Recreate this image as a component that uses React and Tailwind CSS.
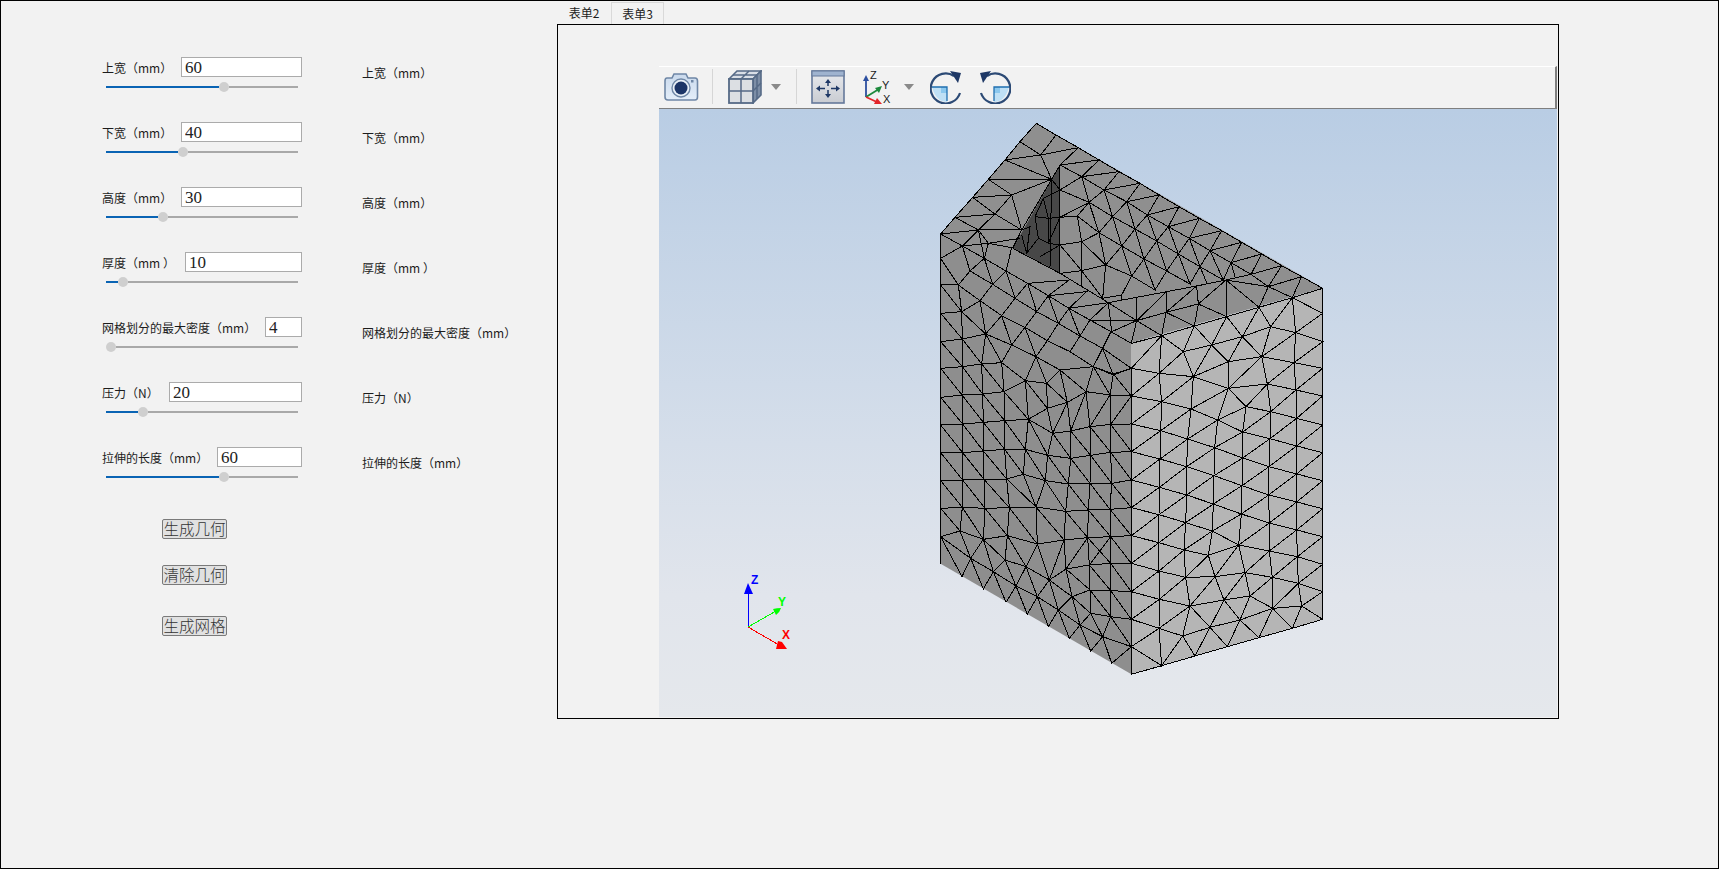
const rows = [
  { label: "上宽（mm）", value: "60", input: "w-[121px]", fill: "w-[113px]" },
  { label: "下宽（mm）", value: "40", input: "w-[121px]", fill: "w-[72px]" },
  { label: "高度（mm）", value: "30", input: "w-[121px]", fill: "w-[52px]" },
  { label: "厚度（mm ）", value: "10", input: "w-[117px]", fill: "w-[12px]" },
  { label: "网格划分的最大密度（mm）", value: "4", input: "w-[37px]", fill: "w-0" },
  { label: "压力（N）", value: "20", input: "w-[133px]", fill: "w-[32px]" },
  { label: "拉伸的长度（mm）", value: "60", input: "w-[85px]", fill: "w-[113px]" },
];

const buttons = [
  { text: "生成几何", margin: "mt-[7px]" },
  { text: "清除几何", margin: "mt-[26px]" },
  { text: "生成网格", margin: "mt-[31px]" },
];

// one polyline per line, traced from the reference at 3x
const toPath = (s) =>
  s
    .trim()
    .split("\n")
    .map((l) => "M" + l.trim().split(/\s+/).join("L"))
    .join("");

const topEdges = toPath(`
  349,40 300,95 255,150 205,208 158,262 105,322 62,372
  349,40 408,75 475,113 537,150 597,185 660,220 717,255 777,290 838,325 905,362 965,397 1025,432 1085,467 1145,500 1208,535
  62,372 127,408 193,445 258,483 323,520 385,557 447,595 510,630 573,665 634,700
  300,95 362,135 408,75
  362,135 475,113
  255,150 362,135 395,208 255,150
  205,208 395,208 275,255 205,208
  158,262 275,255 225,312 158,262
  105,322 225,312 175,360 105,322
  62,372 175,360 305,360 225,312
  275,255 305,360 395,208 420,165 475,113
  420,165 537,150 485,200 420,165
  485,200 597,185 552,240 485,200
  552,240 660,220 620,275 552,240
  620,275 717,255 682,315 620,275
  682,315 777,290 745,350 682,315
  745,350 838,325 808,385 745,350
  808,385 905,362 870,422 808,385
  870,422 965,397 933,458 870,422
  933,458 1025,432 993,493 933,458
  993,493 1085,467 1045,530 993,493
  1045,530 1145,500 1117,563 1045,530
  1117,563 1208,535
  127,408 175,360 193,445
  127,408 205,400 300,385
  175,360 205,400 193,445
  205,400 275,413 258,483
  420,240 485,200 507,277 420,240
  507,277 552,240 578,320 507,277
  578,320 620,275 645,357 578,320
  645,357 682,315 710,393 645,357
  710,393 745,350 775,432 710,393
  775,432 808,385 840,470 775,432
  840,470 870,422 910,510 840,470
  910,510 933,458 945,500
  918,510 993,493
  420,322 472,318 507,277 420,322
  472,318 537,368 507,277
  537,368 578,320 605,408 537,368
  605,408 645,357 672,447 605,408
  672,447 710,393 740,483 672,447
  740,483 775,432 810,522 740,483
  810,522 840,470 860,518
  472,318 485,395 537,368 557,465 485,395 420,405
  557,465 605,408 635,498 557,465
  635,498 672,447 705,540 635,498
  705,540 740,483
  420,490 485,482 420,405
  485,395 485,530
  485,482 557,465 548,565 485,482
  557,465 548,565 605,555 635,498
  605,555 605,570
  323,520 447,510 385,557 500,545 447,595 565,578 510,630 650,632 565,578 575,665 650,632
  420,490 565,578 650,562 740,545 830,528 918,510 1045,530
  650,562 650,632 740,545 738,607 830,528 835,582 918,510 920,620 835,582 738,607 650,632
  565,578 650,562
  650,632 725,677 738,607 823,648 835,582 920,620 1017,592 918,510
  1017,592 1045,530
  650,632 634,700 573,665
`);

const notchEdges = toPath(`
  420,165 420,490
  395,208 390,470
  395,208 420,240 370,265 385,325 420,322
  370,265 345,320 385,325 385,400 420,405 360,440
  345,320 355,385 320,430 330,350 305,360
  355,385 385,400
  420,322 385,400
  278,415 305,360
  278,415 420,490
  320,430 305,375
`);

const upperFaces = toPath(`
  634,700 725,677 823,648 920,620 1017,592 1117,563 1208,535 1208,610 1208,695 1208,775
  634,775 725,677 717,790 634,775
  725,677 790,725 823,648 875,705 920,620 967,680 1017,592 1052,650 1117,563 1127,668 1208,610 1117,563
  790,725 875,705 967,680 1052,650 1127,668 1208,695 1122,758 1127,668 1025,740 1052,650
  1122,758 1208,775
  1025,740 1122,758
  967,680 1025,740 925,755 967,680
  875,705 925,755 820,800 875,705
  790,725 820,800 717,790 790,725
  62,372 62,445 62,525 62,610 62,695 62,775
  62,445 127,408 150,483 193,445 218,523 258,483 285,565 323,520 350,605 385,557 415,640 447,595 480,678 510,630
  150,483 218,523 285,565 350,605 415,640 480,678 548,715 573,665
  62,445 115,525 150,483
  62,525 115,525 180,572 218,523
  180,572 245,617 285,565
  245,617 315,652 350,605
  315,652 382,692 415,640
  382,692 450,725 480,678
  450,725 520,770 548,715 634,775
  62,525 125,605 115,525
  125,605 180,572 197,672 245,617 275,705 315,652 348,740 382,692
  62,610 125,605 127,687 62,610
  125,605 197,672 127,687 62,695
  127,687 62,695
  62,695 127,770 127,687 185,762 197,672 245,758 275,705 348,740
  62,775 127,770 185,762 245,758
  450,725 382,692
  275,705 197,672
  548,715 580,795 520,770
  580,795 634,775
`);

const lowerLeft = toPath(`
  62,-5 126,75 127,-10 188,72 185,-18 252,65 245,-22 316,32 348,-40 380,40 316,32 252,65
  62,82 126,75 188,72 252,65
  62,-5 62,583
  348,-40 420,0 380,40 442,97 420,0 498,65 442,97 382,115 380,40
  382,115 316,32 325,148 252,65
  325,148 382,115 398,190 442,97 452,183 498,65 510,170 570,75 572,163 634,78
  498,65 520,-10 570,75 580,12 520,-10
  580,12 634,-5
  580,12 634,78 570,75 498,65
  420,0 520,-10
  62,82 128,162 126,75 190,157 188,72 254,152 252,65
  62,165 128,162 190,157 254,152 325,148 398,190 452,183 510,170 572,163 634,162
  62,248 128,248 190,243 254,238 316,238 383,256 452,265 512,256 572,247 634,245
  62,332 128,330 192,328 260,327 310,313 376,332 445,342 510,340 575,340 634,330
  62,415 127,412 195,415 268,413 348,411 437,424 505,420 570,418 634,413
  62,500 120,483 190,508 262,497 352,522 432,510 503,503 572,500 634,497
  62,165 128,248 128,162 190,243 190,157 254,238 254,152 316,238 325,148 383,256 398,190 452,265 452,183 512,256 510,170 572,247 572,163 634,245
  62,248 128,330 128,248 192,328 190,243 260,327 254,238 310,313 316,238 376,332 383,256 445,342 452,265 510,340 512,256 575,340 572,247 634,330
  62,332 127,412 128,330 195,415 192,328 268,413 260,327 348,411 310,313
  348,411 376,332 437,424 445,342 505,420 510,340 570,418 575,340 634,413
  62,415 120,483 127,412 190,508 195,415 262,497 268,413 352,522 348,411 432,510 437,424 503,503 505,420 572,500 570,418 634,497
  62,500 152,565 120,483
  62,500 126,620 152,565 190,508 255,570 262,497 318,590 352,522 388,630 432,510 438,597 503,503 508,585 572,500 634,580
  152,565 190,657 220,605 152,565
  190,508 220,605 255,570 318,590 288,648 255,570
  220,605 288,648 352,680 318,590 388,630 352,680
  220,605 258,697 288,648 322,733 352,680 385,770 415,720 352,680
  388,630 438,597 508,585 572,580 634,580
  503,503 572,580 572,500
  388,630 415,720 456,680 388,630
  438,597 456,680 510,660 438,597
  508,585 510,660 572,662 508,585
  572,580 572,662 634,665 572,580
  456,680 512,730 510,660 572,740 572,662 634,748 572,740 512,730
  415,720 480,765 456,680
  480,765 512,730 548,800 480,765
  415,720 448,805 480,765 512,843 548,800 575,880 634,830 548,800
  572,740 548,800
  572,740 634,830
`);

const lowerRight = toPath(`
  634,-5 717,10 820,20 925,55 1042,42 1128,60 1208,78
  634,-5 634,913
  717,10 634,78 725,95 820,20 813,117 925,55 893,150 978,110 925,55
  717,10 725,95
  634,78 725,95 813,117 893,150 968,186 1050,206 1130,228 1208,248
  978,110 1042,42 1052,125 1128,60 1130,145 1208,78
  978,110 1052,125 1130,145 1208,165
  893,150 968,186 978,110
  968,186 1052,125 1050,206 1130,145 1130,228 1208,165
  925,55 925,-25 820,20
  925,55 1025,-40 1042,42 1122,-22 1128,60 1208,-5
  634,162 722,182 803,207 884,233 968,264 1047,290 1130,312 1208,332
  634,245 720,267 800,290 882,317 966,347 1046,375 1130,396 1208,416
  634,330 718,352 800,375 880,402 964,432 1048,459 1130,480 1208,500
  634,413 717,434 797,458 877,483 956,525 1048,543 1132,560 1208,583
  634,497 717,518 792,540 865,556 956,525
  634,580 717,603 797,622 885,620 975,608 1057,622 1135,640 1208,665
  634,665 718,688 810,708 912,690 990,678 1058,715 1145,708 1208,748
  634,748 717,775 788,798 870,772 960,750 1058,715
  634,162 725,95 722,182 813,117 803,207 893,150 884,233 968,186 968,264 1050,206 1047,290 1130,228 1130,312 1208,248
  634,245 722,182 720,267 803,207 800,290 884,233 882,317 968,264 966,347 1047,290 1046,375 1130,312 1130,396 1208,332
  634,330 720,267 718,352 800,290 800,375 882,317 880,402 966,347 964,432 1046,375 1048,459 1130,396 1130,480 1208,416
  634,413 718,352 717,434 800,375 797,458 880,402 877,483 964,432 956,525 1048,459 1048,543 1130,480 1132,560 1208,500
  634,497 717,434 717,518 797,458 792,540 877,483 865,556 885,620 956,525 975,608 1048,543 1057,622 1132,560 1135,640 1208,583
  634,580 717,518 717,603 792,540 797,622 865,556
  634,665 717,603 718,688 797,622 810,708 885,620 912,690 975,608 990,678 1057,622 1058,715 1135,640 1145,708 1208,665
  634,748 718,688 717,775 810,708 788,798 717,775
  810,708 870,772 912,690 960,750 990,678
  1058,715 1117,775 1145,708
  1058,715 1017,803 960,750 922,830 870,772 825,858 788,798 725,887 717,775 634,830
  634,913 725,887 825,858 922,830 1017,803 1117,775 1208,748
  634,830 725,887
  1208,-245 1208,748
`);

function MeshView() {
  return (
    <svg className="block h-full w-full" viewBox="659 109 898 608">
      <defs>
        <linearGradient id="viewerBg" x1="0" y1="0" x2="0" y2="1">
          <stop offset="0" stopColor="#b9cde4" />
          <stop offset="0.55" stopColor="#d5deea" />
          <stop offset="0.8" stopColor="#e1e5ec" />
          <stop offset="1" stopColor="#e5e8ec" />
        </linearGradient>
      </defs>
      <rect x="659" y="109" width="898" height="608" fill="url(#viewerBg)" />
      <polygon points="1036,123 1323,288 1131,343 941,234" fill="#8f8f8f" />
      <polygon points="941,234 1131,343 1131,674 941,564" fill="#8e8e8e" />
      <polygon points="1131,343 1323,288 1323,619 1131,674" fill="#b5b5b5" />
      <polygon points="1060,165 1013,248 1060,273" fill="#474747" />
      <g
        fill="none"
        stroke="#000000"
        strokeWidth="1"
        shapeRendering="crispEdges"
      >
        <g transform="translate(920 110) scale(0.33333)">
          <path d={topEdges} vectorEffect="non-scaling-stroke" />
          <path d={notchEdges} vectorEffect="non-scaling-stroke" />
          <path d={upperFaces} vectorEffect="non-scaling-stroke" />
        </g>
        <g transform="translate(920 370) scale(0.33333)">
          <path d={lowerLeft} vectorEffect="non-scaling-stroke" />
          <path d={lowerRight} vectorEffect="non-scaling-stroke" />
        </g>
      </g>

      {/* axis triad */}
      <g shapeRendering="crispEdges">
        <line x1="748" y1="627" x2="748" y2="590" stroke="#0000ff" />
        <line x1="748" y1="627" x2="776" y2="611" stroke="#00ff00" />
        <line x1="748" y1="627" x2="779" y2="645" stroke="#ff0000" />
      </g>
      <path d="M748,583 L753,594 744,594 Z" fill="#0000ff" />
      <path d="M773,609 Q777,608 781,608 Q780,612 776,615 Z" fill="#00ff00" />
      <path d="M778,641 L782,642 787,649 776,649 Z" fill="#ff0000" />
      <g fontFamily="'Liberation Sans', sans-serif" fontSize="12" fontWeight="700">
        <text x="751" y="584" fill="#0000ff">Z</text>
        <text x="778" y="606" fill="#00ff00">Y</text>
        <text x="782" y="639" fill="#ff0000">X</text>
      </g>
    </svg>
  );
}

function CameraIcon() {
  return (
    <svg className="block h-[30px] w-[35px]" viewBox="0 0 35 30">
      <defs>
        <linearGradient id="camFill" x1="0" y1="0" x2="0" y2="1">
          <stop offset="0" stopColor="#c9d9ec" />
          <stop offset="1" stopColor="#e4eef9" />
        </linearGradient>
      </defs>
      <path
        d="M3,6 H8 L10,2 H22 L24,6 H31 Q33.5,6 33.5,9 V25 Q33.5,28 31,28 H4 Q1,28 1,25 V9 Q1,6 3,6 Z"
        fill="url(#camFill)"
        stroke="#6f87a6"
        strokeWidth="1.6"
      />
      <circle cx="17" cy="16" r="9" fill="#e9f0f8" stroke="#6f87a6" strokeWidth="1.4" />
      <circle cx="17" cy="16" r="6.5" fill="#1c3567" />
      <rect x="27" y="8" width="2.5" height="2.5" fill="#6f87a6" />
    </svg>
  );
}

function CubeIcon() {
  return (
    <svg className="block h-[34px] w-[34px]" viewBox="0 0 34 34">
      <path d="M1,9 L9,1 H33 L25,9 Z" fill="#d9dee6" stroke="#566a86" strokeWidth="1.6" />
      <path d="M25,9 L33,1 V25 L25,33 Z" fill="#7d8ea6" stroke="#566a86" strokeWidth="1.6" />
      <rect x="1" y="9" width="24" height="24" fill="#dcdfe3" stroke="#566a86" strokeWidth="1.8" />
      <path d="M13,9 V33 M1,21 H25 M13,9 L21,1 M5,5 H29 M25,21 L33,13 M29,5 V29" stroke="#566a86" strokeWidth="1.5" fill="none" />
    </svg>
  );
}

function FitIcon() {
  return (
    <svg className="block h-[34px] w-[34px]" viewBox="0 0 34 34">
      <defs>
        <linearGradient id="fitFill" x1="0" y1="0" x2="0" y2="1">
          <stop offset="0" stopColor="#e8eaee" />
          <stop offset="1" stopColor="#c9ccd2" />
        </linearGradient>
      </defs>
      <rect x="1" y="1" width="32" height="32" fill="url(#fitFill)" stroke="#64789a" strokeWidth="1.6" />
      <rect x="1" y="1" width="32" height="5" fill="#9fb3cf" stroke="#64789a" strokeWidth="1" />
      <path
        d="M17,11 V16 M17,20 V26 M7,18.5 H14 M20,18.5 H27"
        stroke="#1e3866"
        strokeWidth="1.5"
      />
      <path
        d="M17,9 L20,13 H14 Z M17,28 L14,24 H20 Z M5,18.5 L9,15.5 V21.5 Z M29,18.5 L25,15.5 V21.5 Z"
        fill="#1e3866"
      />
    </svg>
  );
}

function AxesIcon() {
  return (
    <svg className="block h-[34px] w-[30px] overflow-visible" viewBox="0 0 30 34">
      <path d="M3,27 V9" stroke="#2c4fa0" strokeWidth="1.8" />
      <path d="M3,5 L6,11 H0 Z" fill="#2c4fa0" />
      <path d="M3,27 L16,19" stroke="#1d8a3c" strokeWidth="1.8" />
      <path d="M19,16 L16,23 L12,18 Z" fill="#1d8a3c" />
      <path d="M3,27 L16,33" stroke="#e3262b" strokeWidth="1.8" />
      <path d="M19,34 L11,34 L14,28 Z" fill="#e3262b" />
      <g fontFamily="'Liberation Sans', sans-serif" fontSize="11" fill="#1a1a1a">
        <text x="7" y="9">Z</text>
        <text x="19" y="19">Y</text>
        <text x="20" y="33">X</text>
      </g>
    </svg>
  );
}

function RotateIcon({ flip }) {
  return (
    <svg className={`block h-[34px] w-[32px] ${flip ? "-scale-x-100" : ""}`} viewBox="0 0 32 34">
      <path d="M2,17 H17 V32 Q6,32 2,17 Z" fill="#bfe0f5" />
      <path d="M11,17 H17 V23 H11 Z" fill="#8cc8ee" />
      <path d="M1.5,17 H17 V31" fill="none" stroke="#1f6fb0" strokeWidth="1.3" />
      <path
        d="M24,6 A15,15 0 1 0 30,23"
        fill="none"
        stroke="#2c4a75"
        strokeWidth="2.2"
      />
      <path d="M20,1 L31,3 L28,13 Z" fill="#1e3866" />
    </svg>
  );
}

function Caret() {
  return <div className="h-0 w-0 border-x-[5px] border-t-[6px] border-x-transparent border-t-[#8a8a8a]" />;
}

function Separator() {
  return <div className="h-[35px] w-px bg-[#d6d6d6]" />;
}

function Toolbar() {
  return (
    <div className="flex h-[43px] items-center border-t border-r-2 border-b border-t-white border-r-[#7f7f7f] border-b-[#7f7f7f] pb-[2px] pl-[5px]">
      <CameraIcon />
      <div className="ml-[13px]"><Separator /></div>
      <div className="ml-[15px]"><CubeIcon /></div>
      <div className="ml-[9px]"><Caret /></div>
      <div className="ml-[15px]"><Separator /></div>
      <div className="ml-[14px]"><FitIcon /></div>
      <div className="ml-[18px]"><AxesIcon /></div>
      <div className="ml-[11px]"><Caret /></div>
      <div className="ml-[16px]"><RotateIcon /></div>
      <div className="ml-[17px]"><RotateIcon flip /></div>
    </div>
  );
}

function ParamRow({ row }) {
  return (
    <div className="flex h-[65px]">
      <div className="w-[200px]">
        <div className="flex h-[20px] items-center justify-between">
          <span className="pt-px whitespace-nowrap">{row.label}</span>
          <input
            readOnly
            value={row.value}
            className={`${row.input} h-[20px] border border-[#ababab] bg-white pt-[2px] pl-[3px] font-['Liberation_Serif',serif] text-[17px] leading-none text-[#222] outline-none`}
          />
        </div>
        <div className="mt-[5px] ml-[4px] flex h-[10px] w-[192px] items-center">
          <div className={`${row.fill} h-[2px] bg-[#0a64b4]`} />
          <div className="h-[10px] w-[10px] shrink-0 rounded-full bg-[#cfcfcf]" />
          <div className="h-[2px] flex-1 bg-[#a9a9a9]" />
        </div>
      </div>
      <div className="mt-[6px] ml-[60px] h-[20px] leading-[20px] whitespace-nowrap">{row.label}</div>
    </div>
  );
}

export default function App() {
  return (
    <div className="flex h-[869px] w-[1719px] overflow-hidden border border-black bg-[#f2f2f2] font-['Noto_Sans_CJK_SC','Liberation_Sans',sans-serif] text-[12px] text-[#1c1c1c]">
      <div className="w-[556px] shrink-0 pt-[56px] pl-[101px]">
        {rows.map((row) => (
          <ParamRow key={row.label} row={row} />
        ))}
        {buttons.map((b) => (
          <div
            key={b.text}
            className={`${b.margin} ml-[60px] h-[20px] w-[65px] rounded-[2px] border border-[#7a7a7a] bg-[#e1e1e1] text-center text-[15.5px] leading-[16px] font-light whitespace-nowrap text-[#333]`}
          >
            {b.text}
          </div>
        ))}
      </div>
      <div className="pt-px">
        <div className="flex h-[22px]">
          <div className="flex w-[54px] items-center justify-center">表单2</div>
          <div className="flex w-[53px] items-center justify-center border-x border-t border-[#d9d9d9]">表单3</div>
        </div>
        <div className="h-[695px] w-[1002px] border border-black pt-[41px] pl-[101px]">
          <div className="w-[898px]">
            <Toolbar />
            <div className="h-[608px]">
              <MeshView />
            </div>
          </div>
        </div>
      </div>
    </div>
  );
}
